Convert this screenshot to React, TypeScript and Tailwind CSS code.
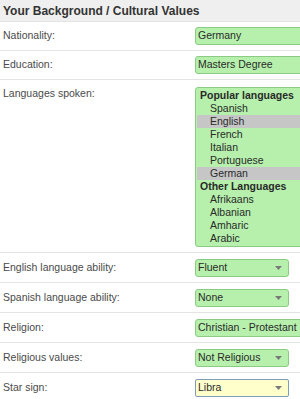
import React from "react";

type Row = { label: string; value: string; kind: "input" | "select"; yellow?: boolean };

const topRows: Row[] = [
  { label: "Nationality:", value: "Germany", kind: "input" },
  { label: "Education:", value: "Masters Degree", kind: "input" },
];

const bottomRows: Row[] = [
  { label: "English language ability:", value: "Fluent", kind: "select" },
  { label: "Spanish language ability:", value: "None", kind: "select" },
  { label: "Religion:", value: "Christian - Protestant", kind: "input" },
  { label: "Religious values:", value: "Not Religious", kind: "select" },
  { label: "Star sign:", value: "Libra", kind: "select", yellow: true },
];

const languages: { group: string; items: string[] }[] = [
  { group: "Popular languages", items: ["Spanish", "English", "French", "Italian", "Portuguese", "German"] },
  { group: "Other Languages", items: ["Afrikaans", "Albanian", "Amharic", "Arabic"] },
];

const selected = ["English", "German"];

function Control({ row }: { row: Row }) {
  if (row.kind === "input") {
    return (
      <div className="w-[120px] h-[18px] shrink-0 flex items-center px-[2px] rounded-[3px] border border-[#8ccb84] bg-[#b6f0ac] text-[10.5px] text-[#2a2a2a] whitespace-nowrap">
        {row.value}
      </div>
    );
  }
  return (
    <div
      className={
        row.yellow
          ? "w-[94px] h-[18px] shrink-0 flex items-center justify-between pl-[2px] pr-[6px] rounded-[2px] border border-[#7f9db9] bg-[#ffffcc] text-[10.5px] text-[#2a2a2a]"
          : "w-[94px] h-[18px] shrink-0 flex items-center justify-between pl-[2px] pr-[6px] rounded-[3px] border border-[#8ccb84] bg-[#b6f0ac] text-[10.5px] text-[#2a2a2a]"
      }
    >
      <span>{row.value}</span>
      <svg width="7" height="4" viewBox="0 0 7 4">
        <path d="M0 0h7L3.5 4z" fill="#7a7a7a" />
      </svg>
    </div>
  );
}

function FieldRow({ row, tall }: { row: Row; tall?: boolean }) {
  return (
    <div
      className={
        tall
          ? "h-[30px] flex items-center border-b border-[#e4e4e4]"
          : "h-[29px] flex items-center border-b border-[#e4e4e4]"
      }
    >
      <div className="w-[195px] shrink-0 pl-[3px] text-[10.5px] text-[#4a4a4a]">{row.label}</div>
      <Control row={row} />
    </div>
  );
}

export default function App() {
  return (
    <div
      className="w-[300px] h-[399px] overflow-hidden bg-white"
      style={{ fontFamily: '"Liberation Sans", Arial, sans-serif' }}
    >
      {/* Header */}
      <div className="h-[22px] flex items-center pl-[3px] bg-[#efefef] border-b border-[#e4e4e4] text-[12px] font-bold text-[#333]">
        Your Background / Cultural Values
      </div>

      {topRows.map((r) => (
        <FieldRow key={r.label} row={r} />
      ))}

      {/* Languages listbox */}
      <div className="flex items-start pt-[7px] pb-[5px] border-b border-[#e4e4e4]">
        <div className="w-[195px] shrink-0 pl-[3px] text-[10.5px] leading-[13px] text-[#4a4a4a]">
          Languages spoken:
        </div>
        <div className="w-[120px] shrink-0 rounded-[3px] border border-[#8ccb84] bg-[#b6f0ac] p-[1px] text-[10.5px] leading-[13px] text-[#2a2a2a]">
          {languages.map((g) => (
            <div key={g.group}>
              <div className="pl-[3px] font-bold">{g.group}</div>
              {g.items.map((it) => (
                <div
                  key={it}
                  className={selected.includes(it) ? "pl-[13px] bg-[#c6c6c6]" : "pl-[13px]"}
                >
                  {it}
                </div>
              ))}
            </div>
          ))}
        </div>
      </div>

      {bottomRows.map((r) => (
        <FieldRow key={r.label} row={r} tall />
      ))}
    </div>
  );
}
